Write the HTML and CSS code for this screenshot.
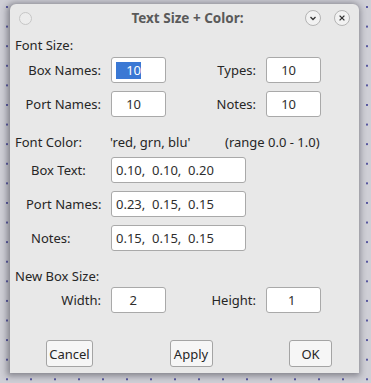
FILE: index.html
```html
<!DOCTYPE html>
<html>
<head>
<meta charset="utf-8">
<link rel="stylesheet" href="styles.css">
</head>
<body>
<div class="desktop">
  <div class="window">
    <div class="titlebar">
      <div class="tb-left"><span class="app-dot"></span></div>
      <div class="title">Text Size + Color:</div>
      <div class="tb-right">
        <span class="wctl">
          <svg width="16" height="16" viewBox="0 0 16 16"><circle cx="8" cy="8" r="7.5" fill="#f2f2f2" stroke="#b4b4b4"/><path d="M5.5 7 L8 9.5 L10.5 7" fill="none" stroke="#333" stroke-width="1.3"/></svg>
        </span>
        <span class="wctl">
          <svg width="16" height="16" viewBox="0 0 16 16"><circle cx="8" cy="8" r="7.5" fill="#f2f2f2" stroke="#b4b4b4"/><path d="M5.6 5.6 L10.4 10.4 M10.4 5.6 L5.6 10.4" fill="none" stroke="#333" stroke-width="1.3"/></svg>
        </span>
      </div>
    </div>
    <div class="content">
      <div class="heading">Font Size:</div>
      <div class="grid">
        <label class="lbl">Box Names:</label>
        <div class="field"><span class="sel">   10</span></div>
        <label class="lbl">Types:</label>
        <div class="field">   10</div>
        <label class="lbl">Port Names:</label>
        <div class="field">   10</div>
        <label class="lbl">Notes:</label>
        <div class="field">   10</div>
      </div>

      <div class="heading color-head">
        <span class="ch-a">Font Color:</span>
        <span class="ch-b">'red, grn, blu'</span>
        <span>(range 0.0 - 1.0)</span>
      </div>
      <div class="crow">
        <label class="clbl">Box Text:</label>
        <div class="field wide">0.10,  0.10,  0.20</div>
      </div>
      <div class="crow">
        <label class="clbl clbl-tight">Port Names:</label>
        <div class="field wide">0.23,  0.15,  0.15</div>
      </div>
      <div class="crow">
        <label class="clbl">Notes:</label>
        <div class="field wide">0.15,  0.15,  0.15</div>
      </div>

      <div class="heading box-head">New Box Size:</div>
      <div class="grid grid-size">
        <label class="lbl">Width:</label>
        <div class="field">    2</div>
        <label class="lbl">Height:</label>
        <div class="field">     1</div>
      </div>

      <div class="buttons">
        <button class="btn btn-cancel">Cancel</button>
        <button class="btn">Apply</button>
        <button class="btn">OK</button>
      </div>
    </div>
  </div>
</div>
</body>
</html>
```

FILE: styles.css
```css
html, body {
  margin: 0;
  padding: 0;
}

body {
  width: 371px;
  height: 383px;
  overflow: hidden;
  background-color: #cfcfd6;
  background-image: radial-gradient(circle, #5858a0 0.9px, transparent 1.3px);
  background-size: 24px 19.6px;
  background-position: -5px -2.8px;
  font-family: "Noto Sans", "DejaVu Sans", sans-serif;
  font-size: 13px;
  color: #262626;
}

.desktop {
  padding: 4px 0 0 10px;
}

.window {
  width: 349px;
  height: 369px;
  background: #e8e8e8;
  border-radius: 6px 6px 0 0;
  box-shadow: -1px 1px 6px 2px rgba(40, 40, 50, 0.45);
  display: flex;
  flex-direction: column;
}

.titlebar {
  height: 28px;
  display: grid;
  grid-template-columns: 1fr auto 1fr;
  align-items: center;
}

.tb-left {
  display: flex;
  padding-left: 9px;
}

.app-dot {
  width: 11px;
  height: 11px;
  border-radius: 50%;
  border: 1px solid #c6c6c6;
  background: #ececec;
}

.title {
  font-weight: bold;
  font-size: 13.5px;
  color: #5a5a5a;
  padding-left: 6px;
}

.tb-right {
  display: flex;
  justify-content: flex-end;
  gap: 13px;
  padding-right: 9px;
}

.wctl {
  display: flex;
  width: 16px;
  height: 16px;
}

.content {
  padding-left: 5px;
}

.heading {
  line-height: 18px;
  margin-top: 4px;
}

.grid {
  display: grid;
  grid-template-columns: 96px 55px 100px 55px;
  grid-auto-rows: 26px;
  row-gap: 8px;
  margin-top: 3px;
}

.lbl {
  align-self: center;
  text-align: right;
  padding-right: 10px;
}

.field {
  box-sizing: border-box;
  height: 26px;
  border: 1px solid #a9a9a9;
  border-radius: 3px;
  background: #fff;
  padding-left: 4px;
  display: flex;
  align-items: center;
  white-space: pre;
  color: #2e2e2e;
}

.sel {
  background: #3a78d4;
  color: #fff;
  line-height: 17px;
}

.color-head {
  margin-top: 16px;
  display: flex;
}

.ch-a {
  width: 95px;
}

.ch-b {
  width: 115px;
}

.crow {
  display: flex;
  align-items: center;
  margin-top: 6px;
}

.crow + .crow {
  margin-top: 8px;
}

.clbl {
  width: 96px;
  box-sizing: border-box;
  padding-left: 16px;
}

.clbl-tight {
  padding-left: 11px;
}

.wide {
  width: 135px;
}

.box-head {
  margin-top: 16px;
}

.grid-size {
  margin-top: 2px;
}

.buttons {
  display: flex;
  justify-content: space-between;
  margin-top: 27px;
  padding: 0 27px 0 31px;
}

.btn {
  font-family: inherit;
  font-size: 13px;
  color: #262626;
  height: 27px;
  width: 43px;
  padding: 0;
  border: 1px solid #a4a4a4;
  border-radius: 3px;
  background: #f6f6f6;
}

.btn-cancel {
  width: 47px;
}
```
